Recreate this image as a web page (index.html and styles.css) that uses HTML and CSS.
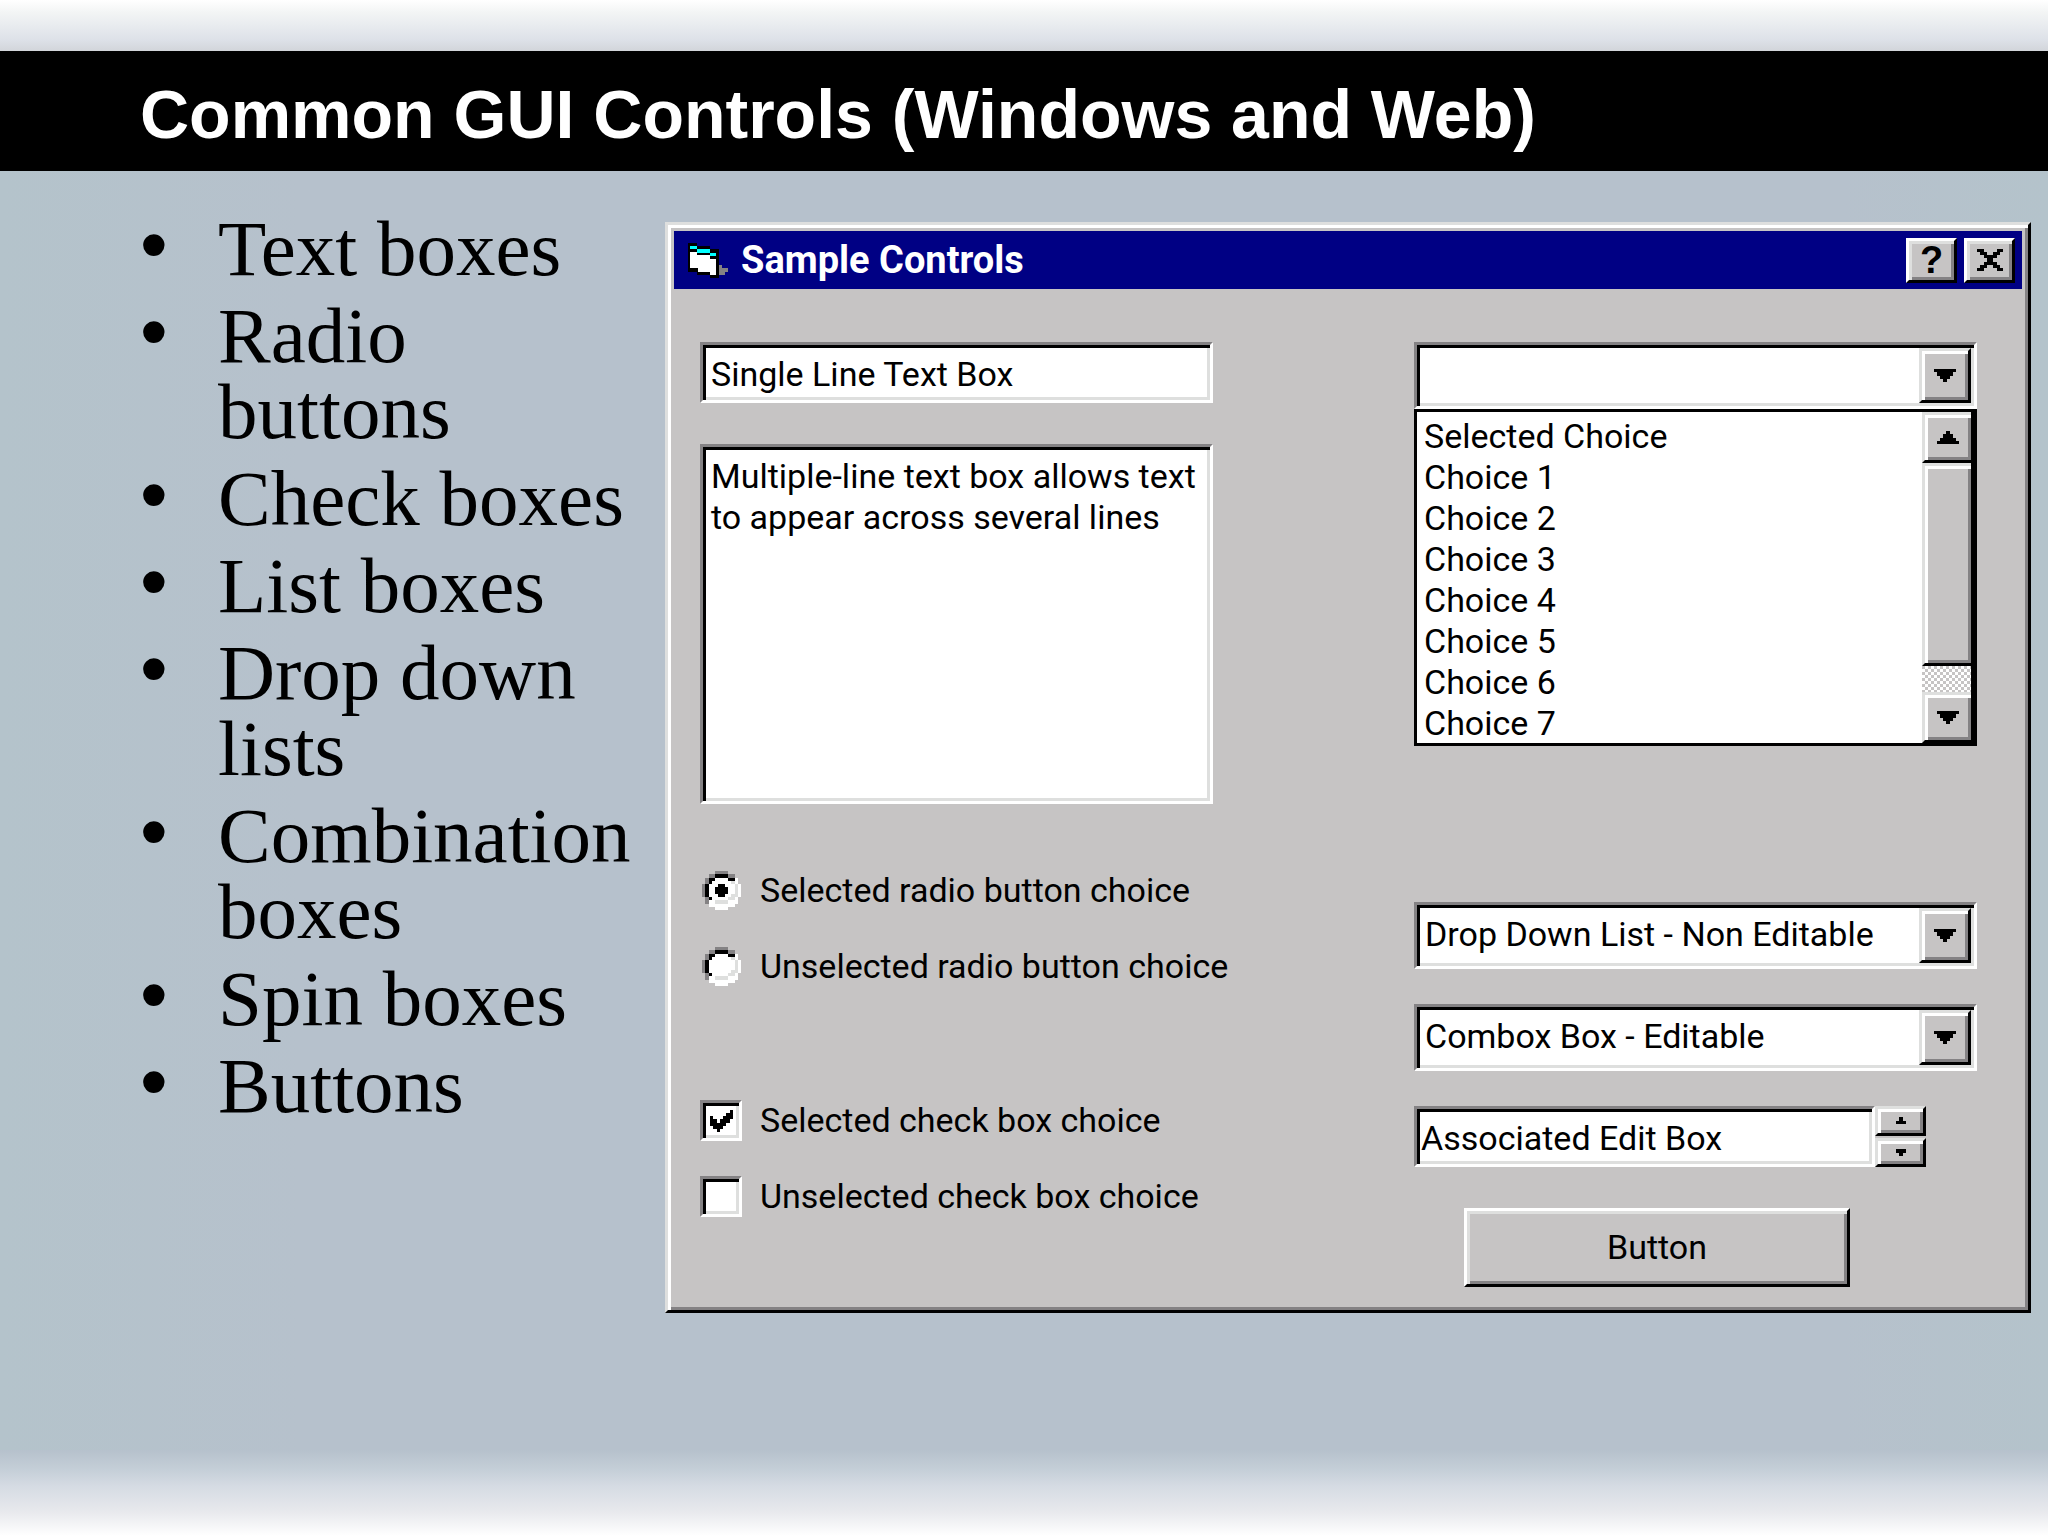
FILE: index.html
```html
<!DOCTYPE html>
<html lang="en">
<head>
    <meta charset="UTF-8">
    <title>Common GUI Controls</title>

    <link rel="stylesheet" href="styles.css">
</head>
<body>
<header class="slide-header">
  <h1>Common GUI Controls (Windows and Web)</h1>
</header>

<main class="slide-content">
  <ul class="topics">
    <li>Text boxes</li>
    <li>Radio buttons</li>
    <li>Check boxes</li>
    <li>List boxes</li>
    <li>Drop down lists</li>
    <li>Combination boxes</li>
    <li>Spin boxes</li>
    <li>Buttons</li>
  </ul>

  <section class="window">
    <div class="title-bar">
      <svg class="title-icon" viewBox="0 0 120 104" shape-rendering="crispEdges" aria-hidden="true">
        <path fill="#000" d="M0 0H28V9H65V18H94V104H65V95H28V85H0Z"/>
        <path fill="#0ff" d="M7 8H27V18H65V28H84V37H65V28H27V18H7Z"/>
        <path fill="#fff" d="M7 27H27V36H65V46H84V95H65V85H30V75H7Z"/>
        <path fill="#848284" d="M94 64H103V75H120V85H112V94H94Z"/>
      </svg>
      <h2>Sample Controls</h2>
      <button class="title-button" type="button" aria-label="Help">?</button>
      <button class="title-button" type="button" aria-label="Close">
        <svg class="close-icon" viewBox="0 0 8 7" preserveAspectRatio="none" shape-rendering="crispEdges">
          <path d="M0 0h2v1h1v1h2v-1h1v-1h2v1h-1v1h-1v1h-1v1h1v1h1v1h1v1h-2v-1h-1v-1h-2v1h-1v1h-2v-1h1v-1h1v-1h1v-1h-1v-1h-1v-1h-1z"/>
        </svg>
      </button>
    </div>

    <form class="window-body">
      <div class="column">
        <input class="field text-box" type="text" value="Single Line Text Box" aria-label="Single line text box">
        <textarea class="field text-area" aria-label="Multiple-line text box">Multiple-line text box allows text to appear across several lines</textarea>

        <div class="choices">
          <label class="choice">
            <span class="mark is--radio">
              <input type="radio" name="radio" checked>
              <svg viewBox="0 0 12 12" shape-rendering="crispEdges">
                <path fill="#fff" d="M4 1h4v1h2v2h1v4h-1v2h-2v1h-4v-1h-2v-2h-1v-4h1v-2h2z"/>
                <path fill="#848284" d="M4 0h4v1h2v1h-2v-1h-4v1h-2v2h-1v4h1v2h-1v-2h-1v-4h1v-2h1v-1h2z"/>
                <path fill="#000" d="M4 1h4v1h2v1h-2v-1h-4v1h-1v1h-1v4h1v1h-1v-1h-1v-4h1v-2h2z"/>
                <path fill="#dedfde" d="M9 3h1v1h1v4h-1v1h-2v1h-4v-1h4v-1h1v-1h1v-3h-1z"/>
                <path fill="#fff" d="M10 2h1v2h1v4h-1v2h-1v1h-2v1h-4v-1h-2v-1h2v1h4v-1h2v-2h1v-4h-1z"/>
                <path class="tick" d="M5 4h2v1h1v2h-1v1h-2v-1h-1v-2h1z"/>
              </svg>
            </span>
            Selected radio button choice
          </label>
          <label class="choice">
            <span class="mark is--radio">
              <input type="radio" name="radio">
              <svg viewBox="0 0 12 12" shape-rendering="crispEdges">
                <path fill="#fff" d="M4 1h4v1h2v2h1v4h-1v2h-2v1h-4v-1h-2v-2h-1v-4h1v-2h2z"/>
                <path fill="#848284" d="M4 0h4v1h2v1h-2v-1h-4v1h-2v2h-1v4h1v2h-1v-2h-1v-4h1v-2h1v-1h2z"/>
                <path fill="#000" d="M4 1h4v1h2v1h-2v-1h-4v1h-1v1h-1v4h1v1h-1v-1h-1v-4h1v-2h2z"/>
                <path fill="#dedfde" d="M9 3h1v1h1v4h-1v1h-2v1h-4v-1h4v-1h1v-1h1v-3h-1z"/>
                <path fill="#fff" d="M10 2h1v2h1v4h-1v2h-1v1h-2v1h-4v-1h-2v-1h2v1h4v-1h2v-2h1v-4h-1z"/>
                <path class="tick" d="M5 4h2v1h1v2h-1v1h-2v-1h-1v-2h1z"/>
              </svg>
            </span>
            Unselected radio button choice
          </label>
        </div>

        <div class="choices is--checks">
          <label class="choice">
            <span class="mark is--check">
              <input type="checkbox" checked>
              <svg viewBox="0 0 7 7" preserveAspectRatio="none" shape-rendering="crispEdges">
                <path class="tick" d="M0 2h1v1h1v1h1v-1h1v-1h1v-1h1v-1h1v3h-1v1h-1v1h-1v1h-1v1h-1v-1h-1v-1h-1z"/>
              </svg>
            </span>
            Selected check box choice
          </label>
          <label class="choice">
            <span class="mark is--check">
              <input type="checkbox">
              <svg viewBox="0 0 7 7" preserveAspectRatio="none" shape-rendering="crispEdges">
                <path class="tick" d="M0 2h1v1h1v1h1v-1h1v-1h1v-1h1v-1h1v3h-1v1h-1v1h-1v1h-1v1h-1v-1h-1v-1h-1z"/>
              </svg>
            </span>
            Unselected check box choice
          </label>
        </div>
      </div>

      <div class="column">
        <div class="combo">
          <input class="combo-value" type="text" aria-label="Choice">
          <button class="arrow-button" type="button" aria-label="Open">
            <svg class="arrow" viewBox="0 0 7 4" preserveAspectRatio="none" shape-rendering="crispEdges"><path d="M0 0h7v1h-1v1h-1v1h-1v1h-1v-1h-1v-1h-1v-1h-1z"/></svg>
          </button>
        </div>
        <div class="list-box">
          <select class="list-options" size="8" aria-label="Choices">
            <option>Selected Choice</option>
            <option>Choice 1</option>
            <option>Choice 2</option>
            <option>Choice 3</option>
            <option>Choice 4</option>
            <option>Choice 5</option>
            <option>Choice 6</option>
            <option>Choice 7</option>
          </select>
          <div class="scroll-bar">
            <button class="arrow-button" type="button" aria-label="Scroll up">
              <svg class="arrow" viewBox="0 0 7 4" preserveAspectRatio="none" shape-rendering="crispEdges"><path d="M0 4h7v-1h-1v-1h-1v-1h-1v-1h-1v1h-1v1h-1v1h-1z"/></svg>
            </button>
            <div class="scroll-thumb"></div>
            <div class="scroll-track"></div>
            <button class="arrow-button" type="button" aria-label="Scroll down">
              <svg class="arrow" viewBox="0 0 7 4" preserveAspectRatio="none" shape-rendering="crispEdges"><path d="M0 0h7v1h-1v1h-1v1h-1v1h-1v-1h-1v-1h-1v-1h-1z"/></svg>
            </button>
          </div>
        </div>

        <div class="fields">
          <div class="combo">
            <select class="combo-value" aria-label="Drop down list">
              <option>Drop Down List - Non Editable</option>
            </select>
            <button class="arrow-button" type="button" aria-label="Open">
              <svg class="arrow" viewBox="0 0 7 4" preserveAspectRatio="none" shape-rendering="crispEdges"><path d="M0 0h7v1h-1v1h-1v1h-1v1h-1v-1h-1v-1h-1v-1h-1z"/></svg>
            </button>
          </div>
          <div class="combo">
            <input class="combo-value" type="text" value="Combox Box - Editable" aria-label="Combination box">
            <button class="arrow-button" type="button" aria-label="Open">
              <svg class="arrow" viewBox="0 0 7 4" preserveAspectRatio="none" shape-rendering="crispEdges"><path d="M0 0h7v1h-1v1h-1v1h-1v1h-1v-1h-1v-1h-1v-1h-1z"/></svg>
            </button>
          </div>
          <div class="spin-box">
            <input class="field" type="text" value="Associated Edit Box" aria-label="Associated edit box">
            <div class="spin-buttons">
              <button type="button" aria-label="Increase">
                <svg class="spin-arrow" viewBox="0 0 3 2" preserveAspectRatio="none" shape-rendering="crispEdges"><path d="M1 0h1v1h1v1h-3v-1h1z"/></svg>
              </button>
              <button type="button" aria-label="Decrease">
                <svg class="spin-arrow" viewBox="0 0 3 2" preserveAspectRatio="none" shape-rendering="crispEdges"><path d="M0 0h3v1h-1v1h-1v-1h-1z"/></svg>
              </button>
            </div>
          </div>
        </div>

        <button class="push-button" type="button">Button</button>
      </div>
    </form>
  </section>
</main>

<footer class="slide-footer"></footer>
</body>
</html>
```
FILE: styles.css
```css
:root {
  --face: #c6c4c4;
  --light: #dedfde;
  --shadow: #848284;
  --navy: #000084;
}

* {
  box-sizing: border-box;
}

body {
  margin: 0;
  min-height: 100vh;
  display: flex;
  flex-direction: column;
  background: linear-gradient(to right, #b4c3cb, #b6c1cc 300px, #b6c1cc 90%, #b4c3cb);
  color: #000;
}

h1,
h2,
ul {
  margin: 0;
  padding: 0;
}

.slide-header {
  border-top: 51px solid transparent;
  padding: 0 140px;
  background: linear-gradient(#000, #000) padding-box, linear-gradient(#fff, #f3f5f5 12px, #dde1e8 40px, #d2d5da 51px) border-box;
}

.slide-header h1 {
  font: bold 68px/120px "Liberation Sans", Arial, sans-serif;
  color: #fff;
  padding-top: 3px;
  height: 120px;
}

.slide-content {
  flex: 1;
  display: grid;
  grid-template-columns: 525px minmax(0, 1fr);
  align-items: start;
  padding: 40px 17px 0 140px;
}

.slide-footer {
  height: 86px;
  background: linear-gradient(#b6c1cc, #c5cfd8 20px, #d5dbe3 36px, #e8e9ed 62px, #fff);
}

/* bullets */

.topics {
  display: flex;
  flex-direction: column;
  gap: 11px;
  width: 500px;
  list-style: none;
  font: 79px/76px "Liberation Serif", "Times New Roman", serif;
}

.topics li {
  display: grid;
  grid-template-columns: 78px 1fr;
}

.topics li::before {
  content: "•";
  font-family: "Liberation Sans", Arial, sans-serif;
  line-height: 68px;
}

/* window */

.window {
  margin-top: 11px;
  padding: 6px;
  background: var(--face);
  border: 3px solid;
  border-color: var(--light) #000 #000 var(--light);
  box-shadow: inset 3px 3px #fff, inset -3px -3px var(--shadow);
}

.window,
.window input,
.window select,
.window textarea,
.window button {
  font: 34px/41px Roboto, "Liberation Sans", sans-serif;
  color: #000;
}

.title-bar {
  display: flex;
  align-items: center;
  gap: 7px;
  height: 58px;
  padding: 0 7px 0 14px;
  background: var(--navy);
}

.title-icon {
  width: 40px;
  height: 35px;
}

.title-bar h2 {
  flex: 1;
  padding-left: 6px;
  font: bold 38px/58px Roboto, "Liberation Sans", sans-serif;
  color: #fff;
}

.window button {
  display: grid;
  place-items: center;
  margin: 0;
  padding: 0;
  background: var(--face);
  border: 3px solid;
  border-color: #fff #000 #000 #fff;
  box-shadow: inset 3px 3px var(--light), inset -3px -3px var(--shadow);
}

.window .title-button {
  width: 51px;
  height: 45px;
  font: bold 38px/39px "Liberation Sans", Arial, sans-serif;
}

.close-icon {
  width: 26px;
  height: 22px;
}

.window-body {
  display: grid;
  grid-template-columns: minmax(0, 513fr) minmax(0, 563fr);
  column-gap: 201px;
  padding: 53px 45px 17px 26px;
}

.column {
  display: flex;
  flex-direction: column;
}

.field,
.combo {
  background: #fff;
  border: 3px solid;
  border-color: var(--shadow) #fff #fff var(--shadow);
  border-radius: 0;
  box-shadow: inset 3px 3px #000, inset -3px -3px var(--light);
  outline: none;
}

.field {
  width: 100%;
  height: 61px;
  padding: 5px 6px 3px 8px;
}

.window .text-area {
  height: 360px;
  margin-top: 41px;
  padding-top: 9px;
  resize: none;
  overflow: hidden;
}

.choices {
  display: flex;
  flex-direction: column;
  gap: 35px;
  margin-top: 66px;
}

.choices.is--checks {
  margin-top: 113px;
}

.choice {
  display: flex;
  align-items: center;
  gap: 18px;
  white-space: nowrap;
}

.mark {
  flex: none;
  display: grid;
  place-items: center;
  width: 42px;
  height: 41px;
}

.mark input,
.mark svg {
  grid-area: 1 / 1;
}

.mark input {
  appearance: none;
  width: 100%;
  height: 100%;
  margin: 0;
}

.mark svg {
  pointer-events: none;
}

.mark.is--radio svg {
  width: 39px;
  height: 39px;
}

.mark.is--check {
  background: #fff;
  border: 3px solid;
  border-color: var(--shadow) #fff #fff var(--shadow);
  box-shadow: inset 3px 3px #000, inset -3px -3px var(--light);
}

.mark.is--check svg {
  width: 23px;
  height: 22px;
}

.tick {
  visibility: hidden;
}

input:checked + svg .tick {
  visibility: visible;
}

/* combo boxes and the open list */

.combo {
  display: flex;
  height: 67px;
  padding: 3px;
}

.combo-value {
  appearance: none;
  flex: 1;
  min-width: 0;
  padding: 0 5px 2px;
  background: none;
  border: 0;
  outline: none;
}

.window .arrow-button {
  width: 52px;
  border-color: var(--light) #000 #000 var(--light);
  box-shadow: inset 3px 3px #fff, inset -3px -3px var(--shadow);
}

.arrow {
  width: 22px;
  height: 13px;
}

.list-box {
  display: flex;
  height: 337px;
  background: #fff;
  border: 3px solid #000;
  border-right-width: 6px;
}

.list-options {
  flex: 1;
  min-width: 0;
  padding: 3px 0 0;
  background: none;
  border: 0;
  border-radius: 0;
  outline: none;
  overflow: hidden;
  scrollbar-width: none;
}

.list-options option {
  height: 41px;
  min-height: 41px;
  padding: 1px 7px 0;
}

.scroll-bar {
  display: flex;
  flex-direction: column;
  width: 49px;
}

.scroll-bar .arrow-button {
  width: 100%;
  height: 51px;
  border-right-width: 0;
}

.scroll-thumb {
  flex: 1;
  background: var(--face);
  border: 3px solid;
  border-color: var(--light) #000 #000 var(--light);
  border-right-width: 0;
  box-shadow: inset 3px 3px #fff, inset -3px -3px var(--shadow);
}

.scroll-track {
  height: 26px;
  background: repeating-conic-gradient(#fff 0 25%, var(--face) 0 50%) 0 0 / 6px 6px;
}

.fields {
  display: flex;
  flex-direction: column;
  gap: 35px;
  margin-top: 156px;
}

.spin-box {
  display: flex;
  padding-right: 51px;
}

.spin-box .field {
  flex: 1;
  min-width: 0;
  padding-left: 4px;
}

.spin-buttons {
  display: flex;
  flex-direction: column;
  gap: 2px;
  width: 51px;
}

.spin-buttons button {
  flex: 1;
  border-color: var(--light) #000 #000 var(--light);
  box-shadow: inset 3px 3px #fff, inset -3px -3px var(--shadow);
}

.spin-arrow {
  width: 10px;
  height: 7px;
}

.window .push-button {
  width: 386px;
  height: 79px;
  margin: 41px 0 0 50px;
}
```
